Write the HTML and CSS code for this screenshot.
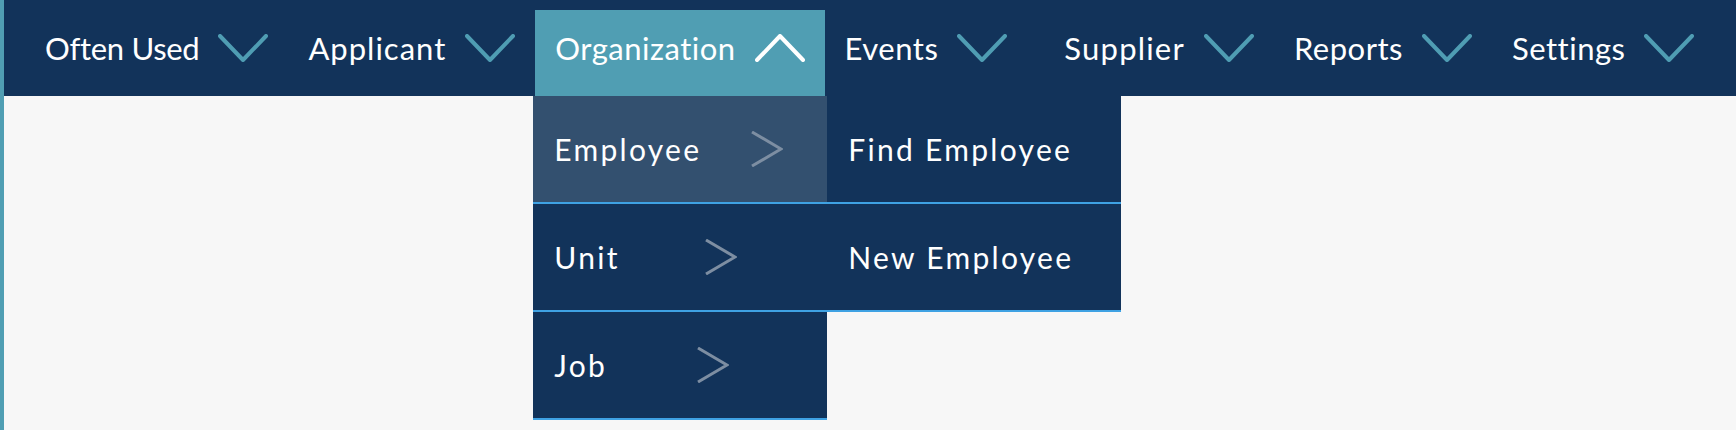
FILE: index.html
```html
<!DOCTYPE html>
<html lang="en">
<head>
<meta charset="utf-8">
<title>Menu</title>
<link rel="stylesheet" href="styles.css">
</head>
<body>
<div class="page">
  <nav class="navbar">
    <div class="nav-item">
      <span class="nav-label nav-label-tight">Often Used</span>
      <svg class="chev" viewBox="0 0 50 28"><path d="M2 2 L25 26 L48 2"/></svg>
    </div>
    <div class="nav-item">
      <span class="nav-label nav-label-mid">Applicant</span>
      <svg class="chev" viewBox="0 0 50 28"><path d="M2 2 L25 26 L48 2"/></svg>
    </div>
    <div class="nav-item active">
      <span class="nav-label">Organization</span>
      <svg class="chev chev-up" viewBox="0 0 50 28"><path d="M2 26 L25 2 L48 26"/></svg>
      <div class="dropdown">
        <div class="menu-col">
          <div class="menu-row hovered"><span class="row-label">Employee</span><svg class="sub-arrow arrow-employee" viewBox="0 0 32 36"><path d="M1 1 L30 18 L1 35"/></svg></div>
          <div class="menu-row"><span class="row-label">Unit</span><svg class="sub-arrow arrow-unit" viewBox="0 0 32 36"><path d="M1 1 L30 18 L1 35"/></svg></div>
          <div class="menu-row"><span class="row-label">Job</span><svg class="sub-arrow arrow-job" viewBox="0 0 32 36"><path d="M1 1 L30 18 L1 35"/></svg></div>
        </div>
        <div class="menu-col">
          <div class="menu-row"><span class="row-label">Find Employee</span></div>
          <div class="menu-row"><span class="row-label">New Employee</span></div>
        </div>
      </div>
    </div>
    <div class="nav-item nav-item-wide">
      <span class="nav-label">Events</span>
      <svg class="chev" viewBox="0 0 50 28"><path d="M2 2 L25 26 L48 2"/></svg>
    </div>
    <div class="nav-item">
      <span class="nav-label nav-label-loose">Supplier</span>
      <svg class="chev" viewBox="0 0 50 28"><path d="M2 2 L25 26 L48 2"/></svg>
    </div>
    <div class="nav-item">
      <span class="nav-label">Reports</span>
      <svg class="chev" viewBox="0 0 50 28"><path d="M2 2 L25 26 L48 2"/></svg>
    </div>
    <div class="nav-item">
      <span class="nav-label">Settings</span>
      <svg class="chev" viewBox="0 0 50 28"><path d="M2 2 L25 26 L48 2"/></svg>
    </div>
  </nav>
</div>
</body>
</html>
```

FILE: styles.css
```css
html, body {
  margin: 0;
  padding: 0;
}
body {
  background: #f7f7f7;
  font-family: "Lato", "Open Sans", sans-serif;
}
.page {
  min-height: 100vh;
  border-left: 4px solid #509eb3;
  box-sizing: border-box;
}
.navbar {
  display: flex;
  align-items: flex-end;
  height: 96px;
  background: #12335a;
  padding-left: 21px;
}
.nav-item {
  position: relative;
  display: flex;
  align-items: center;
  gap: 19px;
  height: 86px;
  box-sizing: border-box;
  padding: 0 20px 10px;
  color: #ffffff;
  font-size: 31px;
  font-weight: 400;
  letter-spacing: 0.5px;
}
.nav-label-tight {
  letter-spacing: -0.3px;
}
.nav-label-mid {
  letter-spacing: 1px;
}
.nav-label-loose {
  letter-spacing: 1.2px;
}
.nav-item-wide {
  padding-right: 37px;
}
.nav-item.active {
  background: #509eb3;
}
.chev {
  width: 50px;
  height: 28px;
  fill: none;
  stroke: #4f9db3;
  stroke-width: 4;
  stroke-linecap: round;
  stroke-linejoin: round;
}
.chev-up {
  stroke: #ffffff;
}
.dropdown {
  position: absolute;
  top: 86px;
  left: -2px;
  display: flex;
  align-items: flex-start;
}
.menu-col {
  display: flex;
  flex-direction: column;
  width: 294px;
}
.menu-row {
  display: flex;
  align-items: center;
  height: 108px;
  box-sizing: border-box;
  padding-left: 21px;
  background: #12335a;
  border-bottom: 2px solid #3fa2e3;
  font-size: 30px;
  font-weight: 400;
  letter-spacing: 2.3px;
  color: #ffffff;
}
.menu-row.hovered {
  background: #33506f;
}
.sub-arrow {
  width: 32px;
  height: 36px;
  fill: none;
  stroke: #7d8ea2;
  stroke-width: 3;
}
.arrow-employee { margin-left: 50px; }
.arrow-unit { margin-left: 85px; }
.arrow-job { margin-left: 90px; }
```
